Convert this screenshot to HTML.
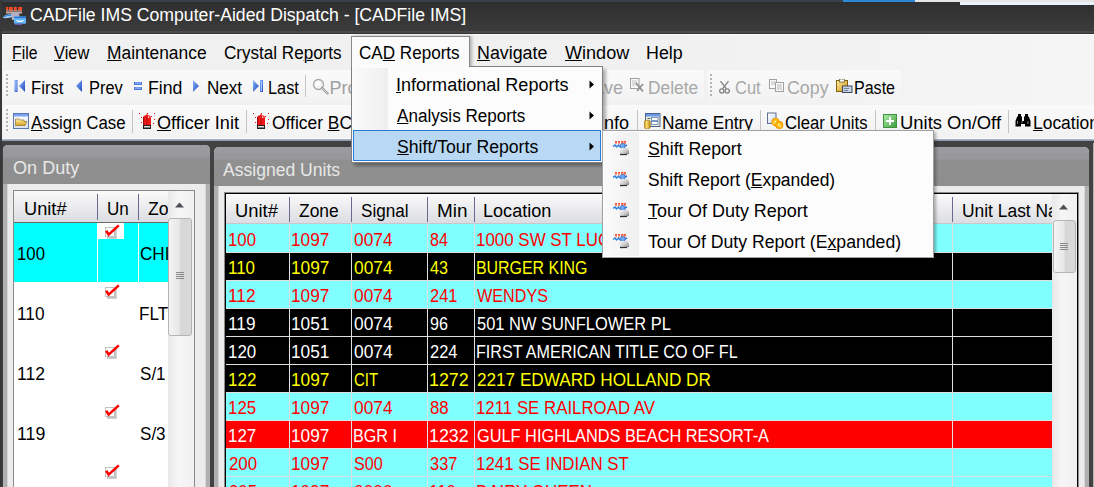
<!DOCTYPE html><html><head><meta charset="utf-8"><style>
html,body{margin:0;padding:0;width:1094px;height:487px;overflow:hidden;background:#3e3e3e}
.t{position:absolute;white-space:pre;font-family:"Liberation Sans",sans-serif}
.r{position:absolute}
u{text-decoration:underline;text-underline-offset:1px;text-decoration-thickness:1px}
</style></head><body>
<div class="r" style="left:0px;top:0px;width:1094px;height:34px;background:linear-gradient(#2e2e2e 2px,#2f2f2f 4px,#3c3c3c 31px)"></div>
<div class="r" style="left:0px;top:0px;width:843px;height:2px;background:#3c4048"></div>
<div class="r" style="left:843px;top:0px;width:72px;height:2px;background:#2b88d8"></div>
<div class="r" style="left:915px;top:0px;width:179px;height:2px;background:#e4e4e4"></div>
<div class="r" style="left:960px;top:2px;width:134px;height:3px;background:#e8f0fa"></div>
<div class="r" style="left:0px;top:31px;width:1094px;height:2px;background:#4a4a4a"></div>
<div class="r" style="left:0px;top:33px;width:1094px;height:1px;background:#363636"></div>
<svg class="r" style="left:0px;top:4px" width="28" height="24" viewBox="0 0 28 24">
<g fill="#f24a24"><rect x="6" y="3" width="2.2" height="3.6"/><rect x="9" y="3" width="3.8" height="3.6"/><rect x="13.8" y="3" width="3" height="3.6"/><rect x="18.2" y="3" width="3.8" height="3.6"/></g>
<rect x="6" y="6.6" width="16" height="0.8" fill="#f8d8d0"/>
<rect x="6" y="8" width="16" height="1.5" fill="#c8a8a8"/>
<path d="M3 13.5 Q6 9.5 12 10.5 L12.5 13 Q8 14.5 3 14Z" fill="#a8d0f4"/>
<path d="M4 13 Q7 11 11 11.5" stroke="#2a88e8" stroke-width="1.2" fill="none"/>
<path d="M11 8.5 L19 8.5 L20 16 L12 16Z" fill="#b0b0c0"/>
<rect x="14" y="12.6" width="12" height="7.2" rx="1" fill="#62b8fa"/>
<rect x="14" y="12.6" width="12" height="1.6" fill="#2a78d8"/>
<path d="M16.5 16.5 Q20 18.2 23.5 16.5" stroke="#ffffff" stroke-width="1.2" fill="none"/>
<rect x="15" y="19.6" width="7" height="1.4" fill="#6a5ab0"/>
</svg>
<div class="t" style="left:30.30px;top:6px;font-size:18px;line-height:18px;color:#ffffff;letter-spacing:0.000px;transform:scaleX(0.9799);transform-origin:0 0;">CADFile IMS Computer-Aided Dispatch - [CADFile IMS]</div>
<div class="r" style="left:0px;top:34px;width:1094px;height:36px;background:linear-gradient(90deg,#f0f0f0 55%,#f5f5f5)"></div>
<div class="r" style="left:0px;top:34px;width:1094px;height:1px;background:#fafafa"></div>
<div class="r" style="left:0px;top:0px;width:2px;height:487px;background:#36383c"></div>
<div class="t" style="left:12.22px;top:44px;font-size:18px;line-height:18px;color:#000;letter-spacing:0.000px;transform:scaleX(0.8752);transform-origin:0 0;"><u>F</u>ile</div>
<div class="t" style="left:54.30px;top:44px;font-size:18px;line-height:18px;color:#000;letter-spacing:0.000px;transform:scaleX(0.9121);transform-origin:0 0;"><u>V</u>iew</div>
<div class="t" style="left:106.73px;top:44px;font-size:18px;line-height:18px;color:#000;letter-spacing:0.000px;transform:scaleX(0.9661);transform-origin:0 0;"><u>M</u>aintenance</div>
<div class="t" style="left:223.60px;top:44px;font-size:18px;line-height:18px;color:#000;letter-spacing:0.000px;transform:scaleX(0.9481);transform-origin:0 0;">Crystal Re<u>p</u>orts</div>
<div class="t" style="left:477.41px;top:44px;font-size:18px;line-height:18px;color:#000;letter-spacing:0.000px;transform:scaleX(0.9910);transform-origin:0 0;"><u>N</u>avigate</div>
<div class="t" style="left:564.60px;top:44px;font-size:18px;line-height:18px;color:#000;letter-spacing:0.000px;transform:scaleX(1.0028);transform-origin:0 0;"><u>W</u>indow</div>
<div class="t" style="left:645.61px;top:44px;font-size:18px;line-height:18px;color:#000;letter-spacing:0.000px;transform:scaleX(0.9914);transform-origin:0 0;">Help</div>
<div class="r" style="left:2px;top:70px;width:1092px;height:35px;background:linear-gradient(90deg,#f0f0f0 55%,#f5f5f5)"></div>
<div class="r" style="left:3px;top:70px;width:701px;height:33px;background:linear-gradient(#fafafa,#f2f2f2);border-radius:3px"></div>
<div class="r" style="left:707px;top:70px;width:195px;height:33px;background:linear-gradient(#fafafa,#f2f2f2);border-radius:3px"></div>
<div class="r" style="left:2px;top:104px;width:1092px;height:35px;background:linear-gradient(90deg,#f0f0f0 55%,#f5f5f5)"></div>
<div class="r" style="left:3px;top:105px;width:1091px;height:33px;background:linear-gradient(#fafafa,#f2f2f2);border-radius:3px 0 0 3px"></div>
<div class="r" style="left:2px;top:138px;width:1092px;height:1px;background:#fbfbfb"></div>
<div class="r" style="left:2px;top:139px;width:1092px;height:2px;background:linear-gradient(#b0b8c8,#8a92a8)"></div>
<div class="r" style="left:6px;top:74px;width:2px;height:2px;background:#b4b4b4"></div><div class="r" style="left:6px;top:78px;width:2px;height:2px;background:#b4b4b4"></div><div class="r" style="left:6px;top:82px;width:2px;height:2px;background:#b4b4b4"></div><div class="r" style="left:6px;top:86px;width:2px;height:2px;background:#b4b4b4"></div><div class="r" style="left:6px;top:90px;width:2px;height:2px;background:#b4b4b4"></div><div class="r" style="left:6px;top:94px;width:2px;height:2px;background:#b4b4b4"></div>
<div class="r" style="left:6px;top:109px;width:2px;height:2px;background:#b4b4b4"></div><div class="r" style="left:6px;top:113px;width:2px;height:2px;background:#b4b4b4"></div><div class="r" style="left:6px;top:117px;width:2px;height:2px;background:#b4b4b4"></div><div class="r" style="left:6px;top:121px;width:2px;height:2px;background:#b4b4b4"></div><div class="r" style="left:6px;top:125px;width:2px;height:2px;background:#b4b4b4"></div><div class="r" style="left:6px;top:129px;width:2px;height:2px;background:#b4b4b4"></div>
<div class="r" style="left:710px;top:74px;width:2px;height:2px;background:#b4b4b4"></div><div class="r" style="left:710px;top:78px;width:2px;height:2px;background:#b4b4b4"></div><div class="r" style="left:710px;top:82px;width:2px;height:2px;background:#b4b4b4"></div><div class="r" style="left:710px;top:86px;width:2px;height:2px;background:#b4b4b4"></div><div class="r" style="left:710px;top:90px;width:2px;height:2px;background:#b4b4b4"></div><div class="r" style="left:710px;top:94px;width:2px;height:2px;background:#b4b4b4"></div>
<svg class="r" style="left:14px;top:80px" width="12" height="12"><defs><linearGradient id="bg1" x1="0" y1="0" x2="1" y2="1"><stop offset="0" stop-color="#8ab4f8"/><stop offset="1" stop-color="#2048c0"/></linearGradient></defs><rect x="0.5" y="0" width="3" height="12" fill="url(#bg1)"/><rect x="1.5" y="1" width="1" height="10" fill="#a8c8ff"/><path d="M11 0 L5 6 L11 12Z" fill="url(#bg1)"/></svg>
<div class="t" style="left:31.37px;top:79px;font-size:18px;line-height:18px;color:#000;letter-spacing:0.000px;transform:scaleX(0.9268);transform-origin:0 0;">First</div>
<svg class="r" style="left:75px;top:80px" width="8" height="12"><defs><linearGradient id="bg2" x1="0" y1="0" x2="1" y2="1"><stop offset="0" stop-color="#8ab4f8"/><stop offset="1" stop-color="#2048c0"/></linearGradient></defs><path d="M7 0 L1 6 L7 12Z" fill="url(#bg2)"/></svg>
<div class="t" style="left:88.79px;top:79px;font-size:18px;line-height:18px;color:#000;letter-spacing:0.000px;transform:scaleX(0.9136);transform-origin:0 0;">Prev</div>
<svg class="r" style="left:134px;top:82px" width="8" height="8"><rect x="0" y="0" width="8" height="3" fill="#4a78e0"/><rect x="1" y="0.6" width="6" height="1" fill="#a8c8ff"/><rect x="0" y="5" width="8" height="3" fill="#4a78e0"/><rect x="1" y="5.6" width="6" height="1" fill="#a8c8ff"/></svg>
<div class="t" style="left:147.92px;top:79px;font-size:18px;line-height:18px;color:#000;letter-spacing:0.000px;transform:scaleX(0.9817);transform-origin:0 0;">Find</div>
<svg class="r" style="left:193px;top:80px" width="7" height="12"><defs><linearGradient id="bg3" x1="0" y1="0" x2="1" y2="1"><stop offset="0" stop-color="#8ab4f8"/><stop offset="1" stop-color="#2048c0"/></linearGradient></defs><path d="M0 0 L6 6 L0 12Z" fill="url(#bg3)"/></svg>
<div class="t" style="left:206.95px;top:79px;font-size:18px;line-height:18px;color:#000;letter-spacing:0.000px;transform:scaleX(0.9470);transform-origin:0 0;">Next</div>
<svg class="r" style="left:253px;top:80px" width="11" height="12"><defs><linearGradient id="bg4" x1="0" y1="0" x2="1" y2="1"><stop offset="0" stop-color="#8ab4f8"/><stop offset="1" stop-color="#2048c0"/></linearGradient></defs><path d="M0 0 L6 6 L0 12Z" fill="url(#bg4)"/><rect x="7" y="0" width="3" height="12" fill="url(#bg4)"/><rect x="8" y="1" width="1" height="10" fill="#a8c8ff"/></svg>
<div class="t" style="left:267.69px;top:79px;font-size:18px;line-height:18px;color:#000;letter-spacing:0.000px;transform:scaleX(0.9055);transform-origin:0 0;">Last</div>
<div class="r" style="left:305px;top:75px;width:1px;height:22px;background:#c4c4c4"></div>
<svg class="r" style="left:312px;top:78px" width="17" height="17"><circle cx="6.5" cy="6.5" r="5" fill="#f4f4f4" stroke="#a8a8a8" stroke-width="1.3"/><circle cx="5.5" cy="5.5" r="2.5" fill="#ffffff"/><path d="M10 10 L15.5 15.5" stroke="#9a9a9a" stroke-width="2.4" stroke-linecap="round"/><path d="M10 10 L15.5 15.5" stroke="#e8e8e8" stroke-width="0.8"/></svg>
<div class="t" style="left:329.60px;top:79px;font-size:18px;line-height:18px;color:#a0a0a0;letter-spacing:0.000px;">Pro</div>
<div class="t" style="left:594.00px;top:79px;font-size:18px;line-height:18px;color:#a8a8a8;letter-spacing:0.000px;">ave</div>
<svg class="r" style="left:630px;top:78px" width="15" height="15"><rect x="0.5" y="0.5" width="8.5" height="10" fill="#f8f8f8" stroke="#a0a0a0"/><path d="M2 3 H7 M2 5 H7 M2 7 H6" stroke="#b0b0b0" stroke-width="0.8"/><path d="M6 5 L13 13.5 M13 6 L7 13" stroke="#909090" stroke-width="1.8"/></svg>
<div class="t" style="left:647.54px;top:79px;font-size:18px;line-height:18px;color:#a8a8a8;letter-spacing:0.000px;transform:scaleX(0.9624);transform-origin:0 0;">Delete</div>
<svg class="r" style="left:719px;top:81px" width="11" height="13"><circle cx="2.8" cy="10" r="2.1" fill="none" stroke="#808080" stroke-width="1.3"/><circle cx="8.2" cy="10" r="2.1" fill="none" stroke="#808080" stroke-width="1.3"/><path d="M3.5 8 L9.5 0 M7.5 8 L1.5 0" stroke="#8a8a8a" stroke-width="1.3"/></svg>
<div class="t" style="left:735.40px;top:79px;font-size:18px;line-height:18px;color:#a8a8a8;letter-spacing:0.000px;transform:scaleX(0.9140);transform-origin:0 0;">Cut</div>
<svg class="r" style="left:769px;top:79px" width="16" height="13"><rect x="0.5" y="0.5" width="7" height="9" fill="#f8f8f8" stroke="#a0a0a0"/><path d="M2 3 H6 M2 5 H6" stroke="#b0b0b0" stroke-width="0.8"/><rect x="6.5" y="3.5" width="8" height="9" fill="#f8f8f8" stroke="#a0a0a0"/><path d="M8 6 H13 M8 8 H13 M8 10 H13" stroke="#a8a8a8" stroke-width="0.8"/></svg>
<div class="t" style="left:786.80px;top:79px;font-size:18px;line-height:18px;color:#a8a8a8;letter-spacing:0.000px;transform:scaleX(0.9900);transform-origin:0 0;">Copy</div>
<svg class="r" style="left:836px;top:79px" width="17" height="14"><defs><linearGradient id="pg" x1="0" y1="0" x2="1" y2="1"><stop offset="0" stop-color="#fff0a0"/><stop offset="1" stop-color="#c89010"/></linearGradient></defs><rect x="0.5" y="1.5" width="11" height="11" fill="url(#pg)" stroke="#806010"/><rect x="3.5" y="0" width="5" height="3" fill="#f8f8f8" stroke="#706030" stroke-width="0.8"/><rect x="6.5" y="7" width="9.5" height="6.5" fill="#c8d4e4" stroke="#404858"/><path d="M8 9.5 H13 M8 11.5 H12" stroke="#607090" stroke-width="0.8"/></svg>
<div class="t" style="left:853.81px;top:79px;font-size:18px;line-height:18px;color:#000;letter-spacing:0.000px;transform:scaleX(0.8908);transform-origin:0 0;">Paste</div>
<svg class="r" style="left:13px;top:113px" width="16" height="16"><defs><linearGradient id="wg" x1="0" y1="0" x2="0" y2="1"><stop offset="0" stop-color="#ffffff"/><stop offset="1" stop-color="#d8e0ec"/></linearGradient><linearGradient id="fg" x1="0" y1="0" x2="0" y2="1"><stop offset="0" stop-color="#fff0a8"/><stop offset="1" stop-color="#d8a020"/></linearGradient></defs><rect x="0.5" y="0.5" width="15" height="15" fill="url(#wg)" stroke="#5a78b0"/><rect x="1" y="1" width="14" height="2.5" fill="#7aa4ec"/><path d="M2.5 12.5 L2.5 6 L6 6 L7 7 L11 7 L11 8.5 L14 8.5 L12 12.5Z" fill="url(#fg)" stroke="#806020" stroke-width="0.6"/></svg>
<div class="t" style="left:31.30px;top:114px;font-size:18px;line-height:18px;color:#000;letter-spacing:0.000px;transform:scaleX(0.9363);transform-origin:0 0;"><u>A</u>ssign Case</div>
<div class="r" style="left:132px;top:110px;width:1px;height:23px;background:#c4c4c4"></div>
<svg class="r" style="left:139px;top:112px" width="17" height="18"><rect x="0" y="1" width="1" height="1" fill="#f01010"/><rect x="8" y="1" width="1" height="1" fill="#f01010"/><rect x="15" y="1" width="1" height="1" fill="#f01010"/><rect x="2" y="5" width="1" height="1" fill="#f01010"/><rect x="12" y="4" width="1" height="1" fill="#f01010"/><rect x="15" y="7" width="1" height="1" fill="#f01010"/><rect x="2" y="10" width="1" height="1" fill="#f01010"/><rect x="14" y="11" width="1" height="1" fill="#f01010"/><path d="M4 13 L4 6 Q4 3.5 7 3.2 L8 1.5 L9 3.2 Q12 3.5 12 6 L12 13Z" fill="#f01818"/><rect x="4" y="5" width="1.2" height="8" fill="#a00808"/><rect x="7.5" y="5" width="1" height="8" fill="#b00a0a"/><rect x="9" y="4.5" width="1.3" height="1.3" fill="#fff"/><rect x="4" y="13" width="8" height="4" fill="#202020"/><rect x="5" y="14" width="6" height="1.5" fill="#e0e0e0"/></svg>
<div class="t" style="left:157.30px;top:114px;font-size:18px;line-height:18px;color:#000;letter-spacing:0.000px;transform:scaleX(1.0025);transform-origin:0 0;"><u>O</u>fficer Init</div>
<div class="r" style="left:246px;top:110px;width:1px;height:23px;background:#c4c4c4"></div>
<svg class="r" style="left:253px;top:112px" width="17" height="18"><rect x="0" y="1" width="1" height="1" fill="#f01010"/><rect x="8" y="1" width="1" height="1" fill="#f01010"/><rect x="15" y="1" width="1" height="1" fill="#f01010"/><rect x="2" y="5" width="1" height="1" fill="#f01010"/><rect x="12" y="4" width="1" height="1" fill="#f01010"/><rect x="15" y="7" width="1" height="1" fill="#f01010"/><rect x="2" y="10" width="1" height="1" fill="#f01010"/><rect x="14" y="11" width="1" height="1" fill="#f01010"/><path d="M4 13 L4 6 Q4 3.5 7 3.2 L8 1.5 L9 3.2 Q12 3.5 12 6 L12 13Z" fill="#f01818"/><rect x="4" y="5" width="1.2" height="8" fill="#a00808"/><rect x="7.5" y="5" width="1" height="8" fill="#b00a0a"/><rect x="9" y="4.5" width="1.3" height="1.3" fill="#fff"/><rect x="4" y="13" width="8" height="4" fill="#202020"/><rect x="5" y="14" width="6" height="1.5" fill="#e0e0e0"/></svg>
<div class="t" style="left:271.50px;top:114px;font-size:18px;line-height:18px;color:#000;letter-spacing:0.000px;transform:scaleX(0.9673);transform-origin:0 0;">Officer <u>B</u>C</div>
<div class="t" style="left:599.00px;top:114px;font-size:18px;line-height:18px;color:#000;letter-spacing:0.000px;">Info</div>
<div class="r" style="left:637px;top:110px;width:1px;height:23px;background:#c4c4c4"></div>
<svg class="r" style="left:644px;top:113px" width="17" height="16"><rect x="1.5" y="0.5" width="14.5" height="13" fill="#f2ecd4" stroke="#4a6490"/><rect x="2" y="1" width="13.5" height="2.5" fill="#6a98e8"/><rect x="3.5" y="5" width="3" height="1" fill="#506890"/><rect x="7.5" y="4.5" width="6.5" height="3" fill="#fff" stroke="#5a80b8" stroke-width="0.8"/><rect x="7.5" y="8.5" width="6.5" height="3" fill="#fff" stroke="#5a80b8" stroke-width="0.8"/><defs><linearGradient id="cy" x1="0" y1="0" x2="1" y2="0"><stop offset="0" stop-color="#c89010"/><stop offset=".4" stop-color="#ffe070"/><stop offset="1" stop-color="#b88010"/></linearGradient></defs><rect x="0.3" y="7.3" width="6" height="8.4" rx="1.8" fill="url(#cy)" stroke="#907020" stroke-width="0.6"/></svg>
<div class="t" style="left:662.04px;top:114px;font-size:18px;line-height:18px;color:#000;letter-spacing:0.000px;transform:scaleX(0.9572);transform-origin:0 0;">Name Entry</div>
<div class="r" style="left:760px;top:110px;width:1px;height:23px;background:#c4c4c4"></div>
<svg class="r" style="left:767px;top:112px" width="17" height="17"><defs><linearGradient id="cw" x1="0" y1="0" x2="1" y2="1"><stop offset="0" stop-color="#ffffff"/><stop offset="1" stop-color="#c8d8f0"/></linearGradient><radialGradient id="fl"><stop offset="0" stop-color="#ffe060"/><stop offset=".7" stop-color="#ffb000"/><stop offset="1" stop-color="#f09000"/></radialGradient></defs><rect x="0.5" y="1" width="8.5" height="10.5" fill="url(#cw)" stroke="#607090"/><circle cx="8.5" cy="10" r="4.2" fill="url(#fl)"/><circle cx="12.3" cy="13" r="4" fill="url(#fl)"/><g fill="#fff" opacity=".8"><rect x="8" y="9" width="1" height="1"/><rect x="11" y="12" width="1" height="1"/><rect x="6" y="11" width="1" height="1"/><rect x="13" y="14" width="1" height="1"/></g></svg>
<div class="t" style="left:785.40px;top:114px;font-size:18px;line-height:18px;color:#000;letter-spacing:0.000px;transform:scaleX(0.9267);transform-origin:0 0;">Clear Units</div>
<div class="r" style="left:875px;top:110px;width:1px;height:23px;background:#c4c4c4"></div>
<svg class="r" style="left:883px;top:114px" width="14" height="14"><defs><linearGradient id="gr" x1="0" y1="0" x2="1" y2="1"><stop offset="0" stop-color="#b0f0a8"/><stop offset="1" stop-color="#3a9a3a"/></linearGradient></defs><rect x="0.5" y="0.5" width="13" height="13" fill="url(#gr)" stroke="#409040"/><rect x="6" y="3" width="2" height="8" fill="#fff"/><rect x="3" y="6" width="8" height="2" fill="#fff"/></svg>
<div class="t" style="left:899.58px;top:114px;font-size:18px;line-height:18px;color:#000;letter-spacing:0.000px;transform:scaleX(1.0233);transform-origin:0 0;">Units On/Off</div>
<div class="r" style="left:1008px;top:110px;width:1px;height:23px;background:#c4c4c4"></div>
<svg class="r" style="left:1015px;top:114px" width="16" height="13"><path d="M3 0 H6 V2 L7 3 V7 H9 V3 L10 2 V0 H13 V2 L14 3 L15.5 7 V12.5 H10 V10 H6 V12.5 H0.5 V7 L2 3 L3 2Z" fill="#000"/><rect x="2" y="7" width="1" height="3" fill="#888"/><rect x="12.5" y="7" width="1" height="3" fill="#888"/><rect x="6.5" y="7" width="1" height="2" fill="#777"/></svg>
<div class="t" style="left:1032.73px;top:114px;font-size:18px;line-height:18px;color:#000;letter-spacing:0.000px;transform:scaleX(0.9682);transform-origin:0 0;"><u>L</u>ocation</div>
<div class="r" style="left:2px;top:141px;width:1092px;height:346px;background:#424242"></div>
<div class="r" style="left:3px;top:145px;width:207px;height:342px;background:#ececec;border-radius:5px 5px 0 0;overflow:hidden"></div><div class="r" style="left:3px;top:145px;width:207px;height:39px;background:linear-gradient(#9c9ca0 0px,#98989c 12px,#909090 13px,#8e8e8e 100%);border-radius:5px 5px 0 0"></div><div class="r" style="left:3px;top:184px;width:4px;height:303px;background:#b0b0b0"></div><div class="r" style="left:7px;top:184px;width:1px;height:303px;background:#d4d4d4"></div><div class="r" style="left:205px;top:184px;width:1px;height:303px;background:#d8d8d8"></div><div class="r" style="left:206px;top:184px;width:4px;height:303px;background:#b0b0b0"></div>
<div class="t" style="left:12.50px;top:159px;font-size:18px;line-height:18px;color:#e8e8e8;letter-spacing:0.000px;transform:scaleX(1.0042);transform-origin:0 0;">On Duty</div>
<div class="r" style="left:214px;top:147px;width:875px;height:340px;background:#ececec;border-radius:5px 5px 0 0;overflow:hidden"></div><div class="r" style="left:214px;top:147px;width:875px;height:39px;background:linear-gradient(#9c9ca0 0px,#98989c 12px,#909090 13px,#8e8e8e 100%);border-radius:5px 5px 0 0"></div><div class="r" style="left:214px;top:186px;width:4px;height:301px;background:#b0b0b0"></div><div class="r" style="left:218px;top:186px;width:1px;height:301px;background:#d4d4d4"></div><div class="r" style="left:1084px;top:186px;width:1px;height:301px;background:#d8d8d8"></div><div class="r" style="left:1085px;top:186px;width:4px;height:301px;background:#b0b0b0"></div>
<div class="t" style="left:223.20px;top:161px;font-size:18px;line-height:18px;color:#e8e8e8;letter-spacing:0.000px;transform:scaleX(0.9754);transform-origin:0 0;">Assigned Units</div>
<div class="r" style="left:1093px;top:143px;width:1px;height:344px;background:#b4b4b4"></div>
<div class="r" style="left:13px;top:190px;width:180px;height:297px;background:#fff;border:1px solid #8a8a8a;border-bottom:none"></div>
<div class="r" style="left:14px;top:191px;width:154px;height:31px;background:linear-gradient(#fafafa,#dcdde2)"></div>
<div class="r" style="left:14px;top:222px;width:154px;height:1px;background:#6e6a68"></div>
<div class="t" style="left:23.79px;top:200px;font-size:18px;line-height:18px;color:#000;letter-spacing:0.000px;transform:scaleX(1.0120);transform-origin:0 0;">Unit#</div>
<div class="t" style="left:107.15px;top:200px;font-size:18px;line-height:18px;color:#000;letter-spacing:0.000px;transform:scaleX(0.9477);transform-origin:0 0;">Un</div>
<div class="t" style="left:148.30px;top:200px;font-size:18px;line-height:18px;color:#000;letter-spacing:0.000px;transform:scaleX(0.9809);transform-origin:0 0;">Zo</div>
<div class="r" style="left:97px;top:194px;width:1px;height:26px;background:#6a6a90"></div>
<div class="r" style="left:138px;top:194px;width:1px;height:26px;background:#6a6a90"></div>
<div class="r" style="left:14px;top:223px;width:154px;height:59px;background:#00ffff"></div>
<div class="r" style="left:97px;top:223px;width:1px;height:59px;background:#ffffff"></div>
<div class="r" style="left:138px;top:223px;width:1px;height:59px;background:#ffffff"></div>
<div class="r" style="left:98px;top:223px;width:26px;height:16px;background:#ffffff"></div>
<div class="t" style="left:16.87px;top:245px;font-size:18px;line-height:18px;color:#000;letter-spacing:0.000px;transform:scaleX(0.9303);transform-origin:0 0;">100</div>
<div class="t" style="left:140.40px;top:245px;font-size:18px;line-height:18px;color:#000;letter-spacing:0.000px;transform:scaleX(0.9500);transform-origin:0 0;">CHI</div>
<svg class="r" style="left:105px;top:224px" width="15" height="16"><rect x="2" y="5" width="9.7" height="9.8" fill="#c4c4c4"/><rect x="0.5" y="3.5" width="9" height="9" fill="#fff" stroke="#c0c0c0"/><path d="M1.2 6.8 L3.6 10.6 L13.8 1.4" stroke="#ff0000" stroke-width="2.6" fill="none" stroke-linejoin="miter"/></svg>
<div class="t" style="left:16.84px;top:305px;font-size:18px;line-height:18px;color:#000;letter-spacing:0.000px;transform:scaleX(0.9572);transform-origin:0 0;">110</div>
<div class="t" style="left:139.45px;top:305px;font-size:18px;line-height:18px;color:#000;letter-spacing:0.000px;transform:scaleX(0.9500);transform-origin:0 0;">FLT</div>
<svg class="r" style="left:105px;top:284px" width="15" height="16"><rect x="2" y="5" width="9.7" height="9.8" fill="#c4c4c4"/><rect x="0.5" y="3.5" width="9" height="9" fill="#fff" stroke="#c0c0c0"/><path d="M1.2 6.8 L3.6 10.6 L13.8 1.4" stroke="#ff0000" stroke-width="2.6" fill="none" stroke-linejoin="miter"/></svg>
<div class="t" style="left:16.82px;top:365px;font-size:18px;line-height:18px;color:#000;letter-spacing:0.000px;transform:scaleX(0.9752);transform-origin:0 0;">112</div>
<div class="t" style="left:140.40px;top:365px;font-size:18px;line-height:18px;color:#000;letter-spacing:0.000px;transform:scaleX(0.9479);transform-origin:0 0;">S/1</div>
<svg class="r" style="left:105px;top:344px" width="15" height="16"><rect x="2" y="5" width="9.7" height="9.8" fill="#c4c4c4"/><rect x="0.5" y="3.5" width="9" height="9" fill="#fff" stroke="#c0c0c0"/><path d="M1.2 6.8 L3.6 10.6 L13.8 1.4" stroke="#ff0000" stroke-width="2.6" fill="none" stroke-linejoin="miter"/></svg>
<div class="t" style="left:16.81px;top:425px;font-size:18px;line-height:18px;color:#000;letter-spacing:0.000px;transform:scaleX(0.9861);transform-origin:0 0;">119</div>
<div class="t" style="left:140.40px;top:425px;font-size:18px;line-height:18px;color:#000;letter-spacing:0.000px;transform:scaleX(0.9479);transform-origin:0 0;">S/3</div>
<svg class="r" style="left:105px;top:404px" width="15" height="16"><rect x="2" y="5" width="9.7" height="9.8" fill="#c4c4c4"/><rect x="0.5" y="3.5" width="9" height="9" fill="#fff" stroke="#c0c0c0"/><path d="M1.2 6.8 L3.6 10.6 L13.8 1.4" stroke="#ff0000" stroke-width="2.6" fill="none" stroke-linejoin="miter"/></svg>
<svg class="r" style="left:105px;top:464px" width="15" height="16"><rect x="2" y="5" width="9.7" height="9.8" fill="#c4c4c4"/><rect x="0.5" y="3.5" width="9" height="9" fill="#fff" stroke="#c0c0c0"/><path d="M1.2 6.8 L3.6 10.6 L13.8 1.4" stroke="#ff0000" stroke-width="2.6" fill="none" stroke-linejoin="miter"/></svg>
<div class="r" style="left:168px;top:191px;width:26px;height:296px;background:linear-gradient(90deg,#e8e8e8,#f6f6f6 40%,#f0f0f0)"></div>
<svg class="r" style="left:175px;top:202px" width="10" height="6"><path d="M0 5.5 L4.5 0.5 L9 5.5Z" fill="#505058"/></svg>
<div class="r" style="left:168px;top:218px;width:24px;height:118px;background:linear-gradient(90deg,#f4f4f4,#e8e8e8 45%,#d6d6d6 55%,#dadada);border:1px solid #b4b4b4;border-radius:3px;box-sizing:border-box"></div>
<div class="r" style="left:176px;top:272px;width:8px;height:1px;background:#8a8a8a"></div>
<div class="r" style="left:176px;top:274px;width:8px;height:1px;background:#8a8a8a"></div>
<div class="r" style="left:176px;top:276px;width:8px;height:1px;background:#8a8a8a"></div>
<div class="r" style="left:176px;top:278px;width:8px;height:1px;background:#8a8a8a"></div>
<div class="r" style="left:224px;top:192px;width:855px;height:295px;background:#8a8a8a"></div>
<div class="r" style="left:225px;top:193px;width:853px;height:294px;background:#000"></div>
<div class="r" style="left:226px;top:194px;width:826px;height:29px;background:linear-gradient(#fafafa,#dcdde2)"></div>
<div class="r" style="left:226px;top:223px;width:826px;height:1px;background:#c8c8cc"></div>
<div class="t" style="left:234.68px;top:202px;font-size:18px;line-height:18px;color:#000;letter-spacing:0.000px;transform:scaleX(1.0193);transform-origin:0 0;">Unit#</div>
<div class="t" style="left:299.20px;top:202px;font-size:18px;line-height:18px;color:#000;letter-spacing:0.000px;transform:scaleX(0.9679);transform-origin:0 0;">Zone</div>
<div class="t" style="left:361.40px;top:202px;font-size:18px;line-height:18px;color:#000;letter-spacing:0.000px;transform:scaleX(0.9503);transform-origin:0 0;">Signal</div>
<div class="t" style="left:436.85px;top:202px;font-size:18px;line-height:18px;color:#000;letter-spacing:0.000px;transform:scaleX(1.0521);transform-origin:0 0;">Min</div>
<div class="t" style="left:483.20px;top:202px;font-size:18px;line-height:18px;color:#000;letter-spacing:0.000px;transform:scaleX(1.0039);transform-origin:0 0;">Location</div>
<div class="t" style="left:961.53px;top:202px;font-size:18px;line-height:18px;color:#000;letter-spacing:0.000px;transform:scaleX(0.9667);transform-origin:0 0;">Unit Last Na</div>
<div class="r" style="left:289px;top:197px;width:1px;height:25px;background:#6a6a90"></div>
<div class="r" style="left:351px;top:197px;width:1px;height:25px;background:#6a6a90"></div>
<div class="r" style="left:427px;top:197px;width:1px;height:25px;background:#6a6a90"></div>
<div class="r" style="left:474px;top:197px;width:1px;height:25px;background:#6a6a90"></div>
<div class="r" style="left:952px;top:197px;width:1px;height:25px;background:#6a6a90"></div>
<div class="r" style="left:226px;top:224px;width:826px;height:28px;background:#80ffff"></div>
<div class="r" style="left:226px;top:252px;width:826px;height:1px;background:#e0e0e0"></div>
<div class="r" style="left:289px;top:224px;width:1px;height:28px;background:#e0e0e0"></div>
<div class="r" style="left:351px;top:224px;width:1px;height:28px;background:#e0e0e0"></div>
<div class="r" style="left:427px;top:224px;width:1px;height:28px;background:#e0e0e0"></div>
<div class="r" style="left:474px;top:224px;width:1px;height:28px;background:#e0e0e0"></div>
<div class="r" style="left:952px;top:224px;width:1px;height:28px;background:#e0e0e0"></div>
<div class="t" style="left:227.67px;top:231px;font-size:18px;line-height:18px;color:#ff0000;letter-spacing:0.000px;transform:scaleX(0.9338);transform-origin:0 0;">100</div>
<div class="t" style="left:291.34px;top:231px;font-size:18px;line-height:18px;color:#ff0000;letter-spacing:0.000px;transform:scaleX(0.9582);transform-origin:0 0;">1097</div>
<div class="t" style="left:353.80px;top:231px;font-size:18px;line-height:18px;color:#ff0000;letter-spacing:0.000px;transform:scaleX(0.9642);transform-origin:0 0;">0074</div>
<div class="t" style="left:430.30px;top:231px;font-size:18px;line-height:18px;color:#ff0000;letter-spacing:0.000px;transform:scaleX(0.8945);transform-origin:0 0;">84</div>
<div class="t" style="left:476.16px;top:231px;font-size:18px;line-height:18px;color:#ff0000;letter-spacing:0.000px;transform:scaleX(0.9400);transform-origin:0 0;">1000 SW ST LUCIE W BLVD</div>
<div class="r" style="left:226px;top:252px;width:826px;height:28px;background:#000000"></div>
<div class="r" style="left:226px;top:280px;width:826px;height:1px;background:#e0e0e0"></div>
<div class="r" style="left:289px;top:252px;width:1px;height:28px;background:#e0e0e0"></div>
<div class="r" style="left:351px;top:252px;width:1px;height:28px;background:#e0e0e0"></div>
<div class="r" style="left:427px;top:252px;width:1px;height:28px;background:#e0e0e0"></div>
<div class="r" style="left:474px;top:252px;width:1px;height:28px;background:#e0e0e0"></div>
<div class="r" style="left:952px;top:252px;width:1px;height:28px;background:#e0e0e0"></div>
<div class="t" style="left:227.66px;top:259px;font-size:18px;line-height:18px;color:#ffff00;letter-spacing:0.000px;transform:scaleX(0.9391);transform-origin:0 0;">110</div>
<div class="t" style="left:291.34px;top:259px;font-size:18px;line-height:18px;color:#ffff00;letter-spacing:0.000px;transform:scaleX(0.9582);transform-origin:0 0;">1097</div>
<div class="t" style="left:353.80px;top:259px;font-size:18px;line-height:18px;color:#ffff00;letter-spacing:0.000px;transform:scaleX(0.9642);transform-origin:0 0;">0074</div>
<div class="t" style="left:430.30px;top:259px;font-size:18px;line-height:18px;color:#ffff00;letter-spacing:0.000px;transform:scaleX(0.8945);transform-origin:0 0;">43</div>
<div class="t" style="left:476.22px;top:259px;font-size:18px;line-height:18px;color:#ffff00;letter-spacing:0.000px;transform:scaleX(0.8846);transform-origin:0 0;">BURGER KING</div>
<div class="r" style="left:226px;top:280px;width:826px;height:28px;background:#80ffff"></div>
<div class="r" style="left:226px;top:308px;width:826px;height:1px;background:#e0e0e0"></div>
<div class="r" style="left:289px;top:280px;width:1px;height:28px;background:#e0e0e0"></div>
<div class="r" style="left:351px;top:280px;width:1px;height:28px;background:#e0e0e0"></div>
<div class="r" style="left:427px;top:280px;width:1px;height:28px;background:#e0e0e0"></div>
<div class="r" style="left:474px;top:280px;width:1px;height:28px;background:#e0e0e0"></div>
<div class="r" style="left:952px;top:280px;width:1px;height:28px;background:#e0e0e0"></div>
<div class="t" style="left:227.64px;top:287px;font-size:18px;line-height:18px;color:#ff0000;letter-spacing:0.000px;transform:scaleX(0.9572);transform-origin:0 0;">112</div>
<div class="t" style="left:291.34px;top:287px;font-size:18px;line-height:18px;color:#ff0000;letter-spacing:0.000px;transform:scaleX(0.9582);transform-origin:0 0;">1097</div>
<div class="t" style="left:353.80px;top:287px;font-size:18px;line-height:18px;color:#ff0000;letter-spacing:0.000px;transform:scaleX(0.9642);transform-origin:0 0;">0074</div>
<div class="t" style="left:430.30px;top:287px;font-size:18px;line-height:18px;color:#ff0000;letter-spacing:0.000px;transform:scaleX(0.9127);transform-origin:0 0;">241</div>
<div class="t" style="left:477.10px;top:287px;font-size:18px;line-height:18px;color:#ff0000;letter-spacing:0.000px;transform:scaleX(0.8987);transform-origin:0 0;">WENDYS</div>
<div class="r" style="left:226px;top:308px;width:826px;height:28px;background:#000000"></div>
<div class="r" style="left:226px;top:336px;width:826px;height:1px;background:#e0e0e0"></div>
<div class="r" style="left:289px;top:308px;width:1px;height:28px;background:#e0e0e0"></div>
<div class="r" style="left:351px;top:308px;width:1px;height:28px;background:#e0e0e0"></div>
<div class="r" style="left:427px;top:308px;width:1px;height:28px;background:#e0e0e0"></div>
<div class="r" style="left:474px;top:308px;width:1px;height:28px;background:#e0e0e0"></div>
<div class="r" style="left:952px;top:308px;width:1px;height:28px;background:#e0e0e0"></div>
<div class="t" style="left:227.64px;top:315px;font-size:18px;line-height:18px;color:#ffffff;letter-spacing:0.000px;transform:scaleX(0.9572);transform-origin:0 0;">119</div>
<div class="t" style="left:291.34px;top:315px;font-size:18px;line-height:18px;color:#ffffff;letter-spacing:0.000px;transform:scaleX(0.9582);transform-origin:0 0;">1051</div>
<div class="t" style="left:353.80px;top:315px;font-size:18px;line-height:18px;color:#ffffff;letter-spacing:0.000px;transform:scaleX(0.9642);transform-origin:0 0;">0074</div>
<div class="t" style="left:430.30px;top:315px;font-size:18px;line-height:18px;color:#ffffff;letter-spacing:0.000px;transform:scaleX(0.8945);transform-origin:0 0;">96</div>
<div class="t" style="left:477.10px;top:315px;font-size:18px;line-height:18px;color:#ffffff;letter-spacing:0.000px;transform:scaleX(0.9140);transform-origin:0 0;">501 NW SUNFLOWER PL</div>
<div class="r" style="left:226px;top:336px;width:826px;height:28px;background:#000000"></div>
<div class="r" style="left:226px;top:364px;width:826px;height:1px;background:#e0e0e0"></div>
<div class="r" style="left:289px;top:336px;width:1px;height:28px;background:#e0e0e0"></div>
<div class="r" style="left:351px;top:336px;width:1px;height:28px;background:#e0e0e0"></div>
<div class="r" style="left:427px;top:336px;width:1px;height:28px;background:#e0e0e0"></div>
<div class="r" style="left:474px;top:336px;width:1px;height:28px;background:#e0e0e0"></div>
<div class="r" style="left:952px;top:336px;width:1px;height:28px;background:#e0e0e0"></div>
<div class="t" style="left:227.66px;top:343px;font-size:18px;line-height:18px;color:#ffffff;letter-spacing:0.000px;transform:scaleX(0.9372);transform-origin:0 0;">120</div>
<div class="t" style="left:291.34px;top:343px;font-size:18px;line-height:18px;color:#ffffff;letter-spacing:0.000px;transform:scaleX(0.9582);transform-origin:0 0;">1051</div>
<div class="t" style="left:353.80px;top:343px;font-size:18px;line-height:18px;color:#ffffff;letter-spacing:0.000px;transform:scaleX(0.9642);transform-origin:0 0;">0074</div>
<div class="t" style="left:430.30px;top:343px;font-size:18px;line-height:18px;color:#ffffff;letter-spacing:0.000px;transform:scaleX(0.9127);transform-origin:0 0;">224</div>
<div class="t" style="left:476.21px;top:343px;font-size:18px;line-height:18px;color:#ffffff;letter-spacing:0.000px;transform:scaleX(0.8949);transform-origin:0 0;">FIRST AMERICAN TITLE CO OF FL</div>
<div class="r" style="left:226px;top:364px;width:826px;height:28px;background:#000000"></div>
<div class="r" style="left:226px;top:392px;width:826px;height:1px;background:#e0e0e0"></div>
<div class="r" style="left:289px;top:364px;width:1px;height:28px;background:#e0e0e0"></div>
<div class="r" style="left:351px;top:364px;width:1px;height:28px;background:#e0e0e0"></div>
<div class="r" style="left:427px;top:364px;width:1px;height:28px;background:#e0e0e0"></div>
<div class="r" style="left:474px;top:364px;width:1px;height:28px;background:#e0e0e0"></div>
<div class="r" style="left:952px;top:364px;width:1px;height:28px;background:#e0e0e0"></div>
<div class="t" style="left:227.66px;top:371px;font-size:18px;line-height:18px;color:#ffff00;letter-spacing:0.000px;transform:scaleX(0.9441);transform-origin:0 0;">122</div>
<div class="t" style="left:291.34px;top:371px;font-size:18px;line-height:18px;color:#ffff00;letter-spacing:0.000px;transform:scaleX(0.9582);transform-origin:0 0;">1097</div>
<div class="t" style="left:353.80px;top:371px;font-size:18px;line-height:18px;color:#ffff00;letter-spacing:0.000px;transform:scaleX(0.8310);transform-origin:0 0;">CIT</div>
<div class="t" style="left:429.31px;top:371px;font-size:18px;line-height:18px;color:#ffff00;letter-spacing:0.000px;transform:scaleX(0.9889);transform-origin:0 0;">1272</div>
<div class="t" style="left:477.10px;top:371px;font-size:18px;line-height:18px;color:#ffff00;letter-spacing:0.000px;transform:scaleX(0.9527);transform-origin:0 0;">2217 EDWARD HOLLAND DR</div>
<div class="r" style="left:226px;top:392px;width:826px;height:28px;background:#80ffff"></div>
<div class="r" style="left:226px;top:420px;width:826px;height:1px;background:#e0e0e0"></div>
<div class="r" style="left:289px;top:392px;width:1px;height:28px;background:#e0e0e0"></div>
<div class="r" style="left:351px;top:392px;width:1px;height:28px;background:#e0e0e0"></div>
<div class="r" style="left:427px;top:392px;width:1px;height:28px;background:#e0e0e0"></div>
<div class="r" style="left:474px;top:392px;width:1px;height:28px;background:#e0e0e0"></div>
<div class="r" style="left:952px;top:392px;width:1px;height:28px;background:#e0e0e0"></div>
<div class="t" style="left:227.66px;top:399px;font-size:18px;line-height:18px;color:#ff0000;letter-spacing:0.000px;transform:scaleX(0.9372);transform-origin:0 0;">125</div>
<div class="t" style="left:291.34px;top:399px;font-size:18px;line-height:18px;color:#ff0000;letter-spacing:0.000px;transform:scaleX(0.9582);transform-origin:0 0;">1097</div>
<div class="t" style="left:353.80px;top:399px;font-size:18px;line-height:18px;color:#ff0000;letter-spacing:0.000px;transform:scaleX(0.9642);transform-origin:0 0;">0074</div>
<div class="t" style="left:430.30px;top:399px;font-size:18px;line-height:18px;color:#ff0000;letter-spacing:0.000px;transform:scaleX(0.9345);transform-origin:0 0;">88</div>
<div class="t" style="left:476.16px;top:399px;font-size:18px;line-height:18px;color:#ff0000;letter-spacing:0.000px;transform:scaleX(0.9352);transform-origin:0 0;">1211 SE RAILROAD AV</div>
<div class="r" style="left:226px;top:420px;width:826px;height:28px;background:#ff0000"></div>
<div class="r" style="left:226px;top:448px;width:826px;height:1px;background:#e0e0e0"></div>
<div class="r" style="left:289px;top:420px;width:1px;height:28px;background:#e0e0e0"></div>
<div class="r" style="left:351px;top:420px;width:1px;height:28px;background:#e0e0e0"></div>
<div class="r" style="left:427px;top:420px;width:1px;height:28px;background:#e0e0e0"></div>
<div class="r" style="left:474px;top:420px;width:1px;height:28px;background:#e0e0e0"></div>
<div class="r" style="left:952px;top:420px;width:1px;height:28px;background:#e0e0e0"></div>
<div class="t" style="left:227.66px;top:427px;font-size:18px;line-height:18px;color:#ffffff;letter-spacing:0.000px;transform:scaleX(0.9372);transform-origin:0 0;">127</div>
<div class="t" style="left:291.34px;top:427px;font-size:18px;line-height:18px;color:#ffffff;letter-spacing:0.000px;transform:scaleX(0.9582);transform-origin:0 0;">1097</div>
<div class="t" style="left:352.90px;top:427px;font-size:18px;line-height:18px;color:#ffffff;letter-spacing:0.000px;transform:scaleX(0.8956);transform-origin:0 0;">BGR I</div>
<div class="t" style="left:429.31px;top:427px;font-size:18px;line-height:18px;color:#ffffff;letter-spacing:0.000px;transform:scaleX(0.9889);transform-origin:0 0;">1232</div>
<div class="t" style="left:477.10px;top:427px;font-size:18px;line-height:18px;color:#ffffff;letter-spacing:0.000px;transform:scaleX(0.9076);transform-origin:0 0;">GULF HIGHLANDS BEACH RESORT-A</div>
<div class="r" style="left:226px;top:448px;width:826px;height:28px;background:#80ffff"></div>
<div class="r" style="left:226px;top:476px;width:826px;height:1px;background:#e0e0e0"></div>
<div class="r" style="left:289px;top:448px;width:1px;height:28px;background:#e0e0e0"></div>
<div class="r" style="left:351px;top:448px;width:1px;height:28px;background:#e0e0e0"></div>
<div class="r" style="left:427px;top:448px;width:1px;height:28px;background:#e0e0e0"></div>
<div class="r" style="left:474px;top:448px;width:1px;height:28px;background:#e0e0e0"></div>
<div class="r" style="left:952px;top:448px;width:1px;height:28px;background:#e0e0e0"></div>
<div class="t" style="left:228.60px;top:455px;font-size:18px;line-height:18px;color:#ff0000;letter-spacing:0.000px;transform:scaleX(0.9360);transform-origin:0 0;">200</div>
<div class="t" style="left:291.34px;top:455px;font-size:18px;line-height:18px;color:#ff0000;letter-spacing:0.000px;transform:scaleX(0.9582);transform-origin:0 0;">1097</div>
<div class="t" style="left:353.80px;top:455px;font-size:18px;line-height:18px;color:#ff0000;letter-spacing:0.000px;transform:scaleX(0.8995);transform-origin:0 0;">S00</div>
<div class="t" style="left:430.30px;top:455px;font-size:18px;line-height:18px;color:#ff0000;letter-spacing:0.000px;transform:scaleX(0.9127);transform-origin:0 0;">337</div>
<div class="t" style="left:476.16px;top:455px;font-size:18px;line-height:18px;color:#ff0000;letter-spacing:0.000px;transform:scaleX(0.9379);transform-origin:0 0;">1241 SE INDIAN ST</div>
<div class="r" style="left:226px;top:476px;width:826px;height:28px;background:#80ffff"></div>
<div class="r" style="left:226px;top:504px;width:826px;height:1px;background:#e0e0e0"></div>
<div class="r" style="left:289px;top:476px;width:1px;height:28px;background:#e0e0e0"></div>
<div class="r" style="left:351px;top:476px;width:1px;height:28px;background:#e0e0e0"></div>
<div class="r" style="left:427px;top:476px;width:1px;height:28px;background:#e0e0e0"></div>
<div class="r" style="left:474px;top:476px;width:1px;height:28px;background:#e0e0e0"></div>
<div class="r" style="left:952px;top:476px;width:1px;height:28px;background:#e0e0e0"></div>
<div class="t" style="left:228.60px;top:483px;font-size:18px;line-height:18px;color:#ff0000;letter-spacing:0.000px;transform:scaleX(0.9327);transform-origin:0 0;">205</div>
<div class="t" style="left:291.34px;top:483px;font-size:18px;line-height:18px;color:#ff0000;letter-spacing:0.000px;transform:scaleX(0.9582);transform-origin:0 0;">1097</div>
<div class="t" style="left:353.80px;top:483px;font-size:18px;line-height:18px;color:#ff0000;letter-spacing:0.000px;transform:scaleX(0.9642);transform-origin:0 0;">0000</div>
<div class="t" style="left:429.36px;top:483px;font-size:18px;line-height:18px;color:#ff0000;letter-spacing:0.000px;transform:scaleX(0.9391);transform-origin:0 0;">110</div>
<div class="t" style="left:476.16px;top:483px;font-size:18px;line-height:18px;color:#ff0000;letter-spacing:0.000px;transform:scaleX(0.9400);transform-origin:0 0;">DAIRY QUEEN</div>
<div class="r" style="left:226px;top:252px;width:826px;height:1px;background:#e0e0e0"></div>
<div class="r" style="left:226px;top:280px;width:826px;height:1px;background:#e0e0e0"></div>
<div class="r" style="left:226px;top:308px;width:826px;height:1px;background:#e0e0e0"></div>
<div class="r" style="left:226px;top:336px;width:826px;height:1px;background:#e0e0e0"></div>
<div class="r" style="left:226px;top:364px;width:826px;height:1px;background:#e0e0e0"></div>
<div class="r" style="left:226px;top:392px;width:826px;height:1px;background:#e0e0e0"></div>
<div class="r" style="left:226px;top:420px;width:826px;height:1px;background:#e0e0e0"></div>
<div class="r" style="left:226px;top:448px;width:826px;height:1px;background:#e0e0e0"></div>
<div class="r" style="left:226px;top:476px;width:826px;height:1px;background:#e0e0e0"></div>
<div class="r" style="left:1052px;top:194px;width:25px;height:293px;background:linear-gradient(90deg,#e8e8e8,#f6f6f6 40%,#f0f0f0)"></div>
<svg class="r" style="left:1059px;top:204px" width="10" height="6"><path d="M0 5.5 L4.5 0.5 L9 5.5Z" fill="#505058"/></svg>
<div class="r" style="left:1053px;top:220px;width:23px;height:53px;background:linear-gradient(90deg,#f4f4f4,#e8e8e8 45%,#d6d6d6 55%,#dadada);border:1px solid #b4b4b4;border-radius:3px;box-sizing:border-box"></div>
<div class="r" style="left:1060px;top:243px;width:8px;height:1px;background:#8a8a8a"></div>
<div class="r" style="left:1060px;top:245px;width:8px;height:1px;background:#8a8a8a"></div>
<div class="r" style="left:1060px;top:247px;width:8px;height:1px;background:#8a8a8a"></div>
<div class="r" style="left:1060px;top:249px;width:8px;height:1px;background:#8a8a8a"></div>
<div class="r" style="left:351px;top:36px;width:119px;height:34px;background:#fbfbfb;border:1px solid #8a8a8a;border-bottom:none;box-sizing:border-box;box-shadow:2px 0 3px rgba(0,0,0,0.25)"></div>
<div class="t" style="left:359.40px;top:44px;font-size:18px;line-height:18px;color:#000;letter-spacing:0.000px;transform:scaleX(0.9488);transform-origin:0 0;">CA<u>D</u> Reports</div>
<div class="r" style="left:351px;top:66px;width:252px;height:97px;background:#fcfcfc;border:1px solid #808080;box-sizing:border-box;box-shadow:3px 3px 3px rgba(0,0,0,0.3)"></div>
<div class="r" style="left:353px;top:68px;width:35px;height:93px;background:linear-gradient(90deg,#fafafa,#efefef)"></div>
<div class="r" style="left:352px;top:65px;width:117px;height:2px;background:#fbfbfb"></div>
<div class="r" style="left:353px;top:130px;width:248px;height:31px;background:#b8d8f4;border:1px solid #2a7ad8;box-sizing:border-box"></div>
<div class="t" style="left:396.00px;top:76px;font-size:18px;line-height:18px;color:#000;letter-spacing:0.000px;transform:scaleX(1.0024);transform-origin:0 0;"><u>I</u>nformational Reports</div>
<svg class="r" style="left:589px;top:80px" width="6" height="9"><path d="M0.5 0.5 L5 4.5 L0.5 8.5Z" fill="#000"/></svg>
<div class="t" style="left:397.00px;top:107px;font-size:18px;line-height:18px;color:#000;letter-spacing:0.000px;transform:scaleX(0.9500);transform-origin:0 0;"><u>A</u>nalysis Reports</div>
<svg class="r" style="left:589px;top:111px" width="6" height="9"><path d="M0.5 0.5 L5 4.5 L0.5 8.5Z" fill="#000"/></svg>
<div class="t" style="left:397.00px;top:138px;font-size:18px;line-height:18px;color:#000;letter-spacing:0.000px;transform:scaleX(0.9801);transform-origin:0 0;"><u>S</u>hift/Tour Reports</div>
<svg class="r" style="left:589px;top:142px" width="6" height="9"><path d="M0.5 0.5 L5 4.5 L0.5 8.5Z" fill="#000"/></svg>
<div class="r" style="left:602px;top:130px;width:332px;height:128px;background:#fcfcfc;border:1px solid #a0a0a0;box-sizing:border-box;box-shadow:2px 2px 3px rgba(0,0,0,0.3)"></div>
<div class="r" style="left:604px;top:132px;width:35px;height:124px;background:linear-gradient(90deg,#fafafa,#efefef)"></div>
<svg class="r" style="left:612px;top:140px" width="18" height="16"><defs><linearGradient id="pr0" x1="0" y1="0" x2="1" y2="1"><stop offset="0" stop-color="#fafafa"/><stop offset=".55" stop-color="#c8c8c8"/><stop offset="1" stop-color="#6a6a6a"/></linearGradient><linearGradient id="rd0" x1="0" y1="0" x2="0" y2="1"><stop offset="0" stop-color="#f04020"/><stop offset="1" stop-color="#ffc0b0"/></linearGradient></defs><g fill="url(#rd0)"><rect x="3" y="1" width="2" height="3.5"/><rect x="6" y="1" width="2" height="3.5"/><rect x="9" y="1" width="2.5" height="3.5"/><rect x="12" y="1" width="2" height="3.5"/></g><path d="M1 6.5 L3 5 L4.5 7 L6.5 5 L8 7" stroke="#2a80e0" stroke-width="1.4" fill="none"/><path d="M13 6 L15 5" stroke="#2a80e0" stroke-width="1.4"/><rect x="8.5" y="3.5" width="4.5" height="5" rx="1.5" fill="#6aa8f8" stroke="#3050a0" stroke-width=".6"/><path d="M8 15 L7.5 10 Q8 8 10 8 L15 8 Q17 9 17 11 L17 14 L9 15.5Z" fill="url(#pr0)"/><path d="M8 14.5 L15 14.5" stroke="#303030" stroke-width="1.2"/></svg>
<div class="t" style="left:647.50px;top:140px;font-size:18px;line-height:18px;color:#000;letter-spacing:0.000px;transform:scaleX(0.9859);transform-origin:0 0;"><u>S</u>hift Report</div>
<svg class="r" style="left:612px;top:171px" width="18" height="16"><defs><linearGradient id="pr1" x1="0" y1="0" x2="1" y2="1"><stop offset="0" stop-color="#fafafa"/><stop offset=".55" stop-color="#c8c8c8"/><stop offset="1" stop-color="#6a6a6a"/></linearGradient><linearGradient id="rd1" x1="0" y1="0" x2="0" y2="1"><stop offset="0" stop-color="#f04020"/><stop offset="1" stop-color="#ffc0b0"/></linearGradient></defs><g fill="url(#rd1)"><rect x="3" y="1" width="2" height="3.5"/><rect x="6" y="1" width="2" height="3.5"/><rect x="9" y="1" width="2.5" height="3.5"/><rect x="12" y="1" width="2" height="3.5"/></g><path d="M1 6.5 L3 5 L4.5 7 L6.5 5 L8 7" stroke="#2a80e0" stroke-width="1.4" fill="none"/><path d="M13 6 L15 5" stroke="#2a80e0" stroke-width="1.4"/><rect x="8.5" y="3.5" width="4.5" height="5" rx="1.5" fill="#6aa8f8" stroke="#3050a0" stroke-width=".6"/><path d="M8 15 L7.5 10 Q8 8 10 8 L15 8 Q17 9 17 11 L17 14 L9 15.5Z" fill="url(#pr1)"/><path d="M8 14.5 L15 14.5" stroke="#303030" stroke-width="1.2"/></svg>
<div class="t" style="left:647.50px;top:171px;font-size:18px;line-height:18px;color:#000;letter-spacing:0.000px;transform:scaleX(0.9692);transform-origin:0 0;">Shift Report (<u>E</u>xpanded)</div>
<svg class="r" style="left:612px;top:202px" width="18" height="16"><defs><linearGradient id="pr2" x1="0" y1="0" x2="1" y2="1"><stop offset="0" stop-color="#fafafa"/><stop offset=".55" stop-color="#c8c8c8"/><stop offset="1" stop-color="#6a6a6a"/></linearGradient><linearGradient id="rd2" x1="0" y1="0" x2="0" y2="1"><stop offset="0" stop-color="#f04020"/><stop offset="1" stop-color="#ffc0b0"/></linearGradient></defs><g fill="url(#rd2)"><rect x="3" y="1" width="2" height="3.5"/><rect x="6" y="1" width="2" height="3.5"/><rect x="9" y="1" width="2.5" height="3.5"/><rect x="12" y="1" width="2" height="3.5"/></g><path d="M1 6.5 L3 5 L4.5 7 L6.5 5 L8 7" stroke="#2a80e0" stroke-width="1.4" fill="none"/><path d="M13 6 L15 5" stroke="#2a80e0" stroke-width="1.4"/><rect x="8.5" y="3.5" width="4.5" height="5" rx="1.5" fill="#6aa8f8" stroke="#3050a0" stroke-width=".6"/><path d="M8 15 L7.5 10 Q8 8 10 8 L15 8 Q17 9 17 11 L17 14 L9 15.5Z" fill="url(#pr2)"/><path d="M8 14.5 L15 14.5" stroke="#303030" stroke-width="1.2"/></svg>
<div class="t" style="left:647.50px;top:202px;font-size:18px;line-height:18px;color:#000;letter-spacing:0.000px;transform:scaleX(0.9984);transform-origin:0 0;"><u>T</u>our Of Duty Report</div>
<svg class="r" style="left:612px;top:233px" width="18" height="16"><defs><linearGradient id="pr3" x1="0" y1="0" x2="1" y2="1"><stop offset="0" stop-color="#fafafa"/><stop offset=".55" stop-color="#c8c8c8"/><stop offset="1" stop-color="#6a6a6a"/></linearGradient><linearGradient id="rd3" x1="0" y1="0" x2="0" y2="1"><stop offset="0" stop-color="#f04020"/><stop offset="1" stop-color="#ffc0b0"/></linearGradient></defs><g fill="url(#rd3)"><rect x="3" y="1" width="2" height="3.5"/><rect x="6" y="1" width="2" height="3.5"/><rect x="9" y="1" width="2.5" height="3.5"/><rect x="12" y="1" width="2" height="3.5"/></g><path d="M1 6.5 L3 5 L4.5 7 L6.5 5 L8 7" stroke="#2a80e0" stroke-width="1.4" fill="none"/><path d="M13 6 L15 5" stroke="#2a80e0" stroke-width="1.4"/><rect x="8.5" y="3.5" width="4.5" height="5" rx="1.5" fill="#6aa8f8" stroke="#3050a0" stroke-width=".6"/><path d="M8 15 L7.5 10 Q8 8 10 8 L15 8 Q17 9 17 11 L17 14 L9 15.5Z" fill="url(#pr3)"/><path d="M8 14.5 L15 14.5" stroke="#303030" stroke-width="1.2"/></svg>
<div class="t" style="left:647.50px;top:233px;font-size:18px;line-height:18px;color:#000;letter-spacing:0.000px;transform:scaleX(0.9805);transform-origin:0 0;">Tour Of Duty Report (E<u>x</u>panded)</div>
</body></html>
